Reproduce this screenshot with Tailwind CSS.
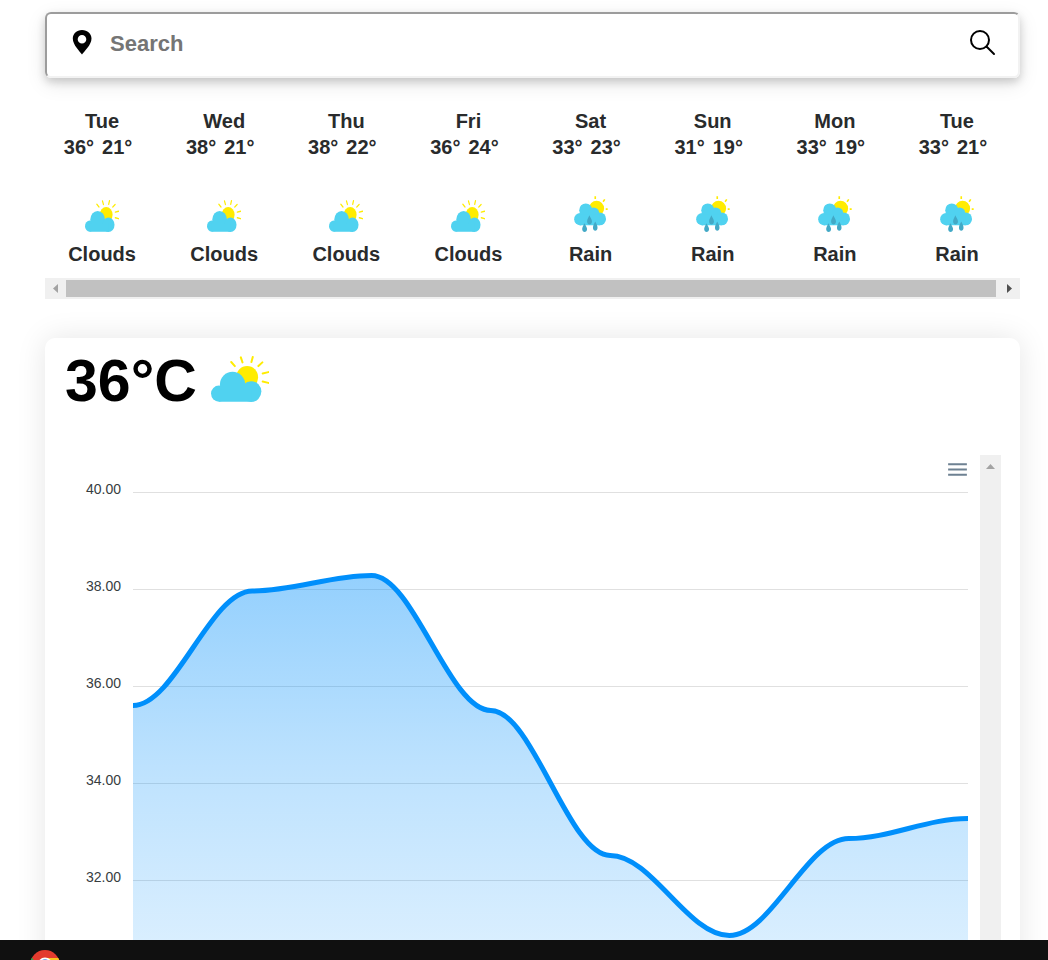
<!DOCTYPE html>
<html lang="en">
<head>
<meta charset="utf-8">
<meta name="viewport" content="width=device-width, initial-scale=1">
<title>Weather forecast</title>
<script src="https://cdn.jsdelivr.net/npm/@tailwindcss/browser@4"></script>
</head>
<body class="flex h-screen flex-col overflow-hidden bg-white font-['Liberation_Sans',Arial,sans-serif]">

<svg class="hidden" aria-hidden="true">
  <symbol id="partly-cloudy" viewBox="513 80 175 137" preserveAspectRatio="none">
    <circle cx="622" cy="143" r="33" fill="#ffec00"/>
    <path d="M574 98l11 12M603 84l5 15M639 83l-4 15M668 99l-12 11M686 128l-17 4M686 160l-17-4" fill="none" stroke="#ffec00" stroke-width="6" stroke-linecap="round"/>
    <g fill="#50d2f0"><circle cx="537" cy="192" r="24"/><circle cx="578" cy="165" r="38"/><circle cx="634" cy="186" r="31"/><path d="M537 180h97v36h-97z"/></g>
  </symbol>
  <symbol id="rain-sun" viewBox="98 290 104 107" preserveAspectRatio="none">
    <circle cx="167" cy="327" r="23" fill="#ffec00"/>
    <path d="M163 291v8M192 300l-5 7M195 329h6" fill="none" stroke="#ffec00" stroke-width="5"/>
    <g fill="#50d2f0"><circle cx="117" cy="359" r="18.500"/><circle cx="134" cy="332" r="20"/><circle cx="158" cy="341" r="17"/><circle cx="177" cy="358" r="19"/><path d="M117 345h60v32h-60z"/></g>
    <path d="M145 347C142 354 138 360 138 366C138 378 153 378 153 366C153 360 148 354 145 347M130 371C127 377 123 383 123 388C123 400 138 400 138 388C138 383 133 377 130 371M163 366C160 372 156 378 156 384C156 396 170 396 170 384C170 378 166 372 163 366" fill="#42a9c6"/>
  </symbol>
</svg>

<main class="min-h-0 flex-1 overflow-hidden pt-3 pr-7 pl-[45px]">
  <form class="flex h-[66px] items-center rounded-md border-2 border-t-[#9c9c9c] border-r-[#f2f2f2] border-b-[#f2f2f2] border-l-[#9c9c9c] pr-[22px] pl-[25px] shadow-[0_4px_8px_rgba(0,0,0,0.16),0_6px_20px_rgba(0,0,0,0.1)]" onsubmit="return false">
    <svg class="mb-1.5 h-[26px] w-5 shrink-0" viewBox="0 0 20 26" aria-hidden="true"><path fill-rule="evenodd" d="M10 1C4.6 1 .8 4.800 .8 9.500C.8 16 8 22.500 10 25.500C12 22.500 19.500 16 19.500 9.500C19.500 4.800 15.500 1 10 1zM10 6a4.300 4.300 0 1 1 0 8.600a4.300 4.300 0 0 1 0-8.600z"/></svg>
    <input type="text" aria-label="Search" placeholder="Search" class="mb-0.5 ml-[18px] h-10 min-w-0 flex-1 text-[22px] font-bold text-black outline-none placeholder:text-[#757575]">
    <button type="submit" aria-label="Submit search" class="mb-1.5">
      <svg class="block size-7" viewBox="0 0 28 28" fill="none" stroke="#000" stroke-width="2" stroke-linecap="round"><circle cx="12" cy="12" r="9"/><path d="M18.500 18.500L26 26"/></svg>
    </button>
  </form>

  <section aria-label="Daily forecast" class="mt-[30px]">
    <div class="mr-0.5 -ml-1 grid grid-cols-8 text-center text-xl leading-[26px] font-bold text-[#292b2c]">
      <div><p>Tue</p><p class="flex justify-center gap-2 pr-2"><span>36°</span><span>21°</span></p><div class="flex h-[72px] items-end justify-center"><svg class="h-8 w-[34px]"><use href="#partly-cloudy"/></svg></div><p class="mt-[9px]">Clouds</p></div>
      <div><p>Wed</p><p class="flex justify-center gap-2 pr-2"><span>38°</span><span>21°</span></p><div class="flex h-[72px] items-end justify-center"><svg class="h-8 w-[34px]"><use href="#partly-cloudy"/></svg></div><p class="mt-[9px]">Clouds</p></div>
      <div><p>Thu</p><p class="flex justify-center gap-2 pr-2"><span>38°</span><span>22°</span></p><div class="flex h-[72px] items-end justify-center"><svg class="h-8 w-[34px]"><use href="#partly-cloudy"/></svg></div><p class="mt-[9px]">Clouds</p></div>
      <div><p>Fri</p><p class="flex justify-center gap-2 pr-2"><span>36°</span><span>24°</span></p><div class="flex h-[72px] items-end justify-center"><svg class="h-8 w-[34px]"><use href="#partly-cloudy"/></svg></div><p class="mt-[9px]">Clouds</p></div>
      <div><p>Sat</p><p class="flex justify-center gap-2 pr-2"><span>33°</span><span>23°</span></p><div class="flex h-[72px] items-end justify-center"><svg class="h-9 w-[34px]"><use href="#rain-sun"/></svg></div><p class="mt-[9px]">Rain</p></div>
      <div><p>Sun</p><p class="flex justify-center gap-2 pr-2"><span>31°</span><span>19°</span></p><div class="flex h-[72px] items-end justify-center"><svg class="h-9 w-[34px]"><use href="#rain-sun"/></svg></div><p class="mt-[9px]">Rain</p></div>
      <div><p>Mon</p><p class="flex justify-center gap-2 pr-2"><span>33°</span><span>19°</span></p><div class="flex h-[72px] items-end justify-center"><svg class="h-9 w-[34px]"><use href="#rain-sun"/></svg></div><p class="mt-[9px]">Rain</p></div>
      <div><p>Tue</p><p class="flex justify-center gap-2 pr-2"><span>33°</span><span>21°</span></p><div class="flex h-[72px] items-end justify-center"><svg class="h-9 w-[34px]"><use href="#rain-sun"/></svg></div><p class="mt-[9px]">Rain</p></div>
    </div>
    <div class="mt-[11px] flex h-[21px] items-center bg-[#f0f0f0]" aria-hidden="true">
      <svg class="h-[21px] w-[21px] shrink-0" viewBox="0 0 21 21"><path d="M13 6v9l-5-4.500z" fill="#a3a3a3"/></svg>
      <div class="h-[17px] flex-1 bg-[#c1c1c1]"></div>
      <svg class="h-[21px] w-6 shrink-0" viewBox="0 0 24 21"><path d="M11 6v9l5-4.500z" fill="#505050"/></svg>
    </div>
  </section>

  <section aria-label="Temperature" class="mt-[39px] h-[720px] rounded-[10px] bg-white px-5 pt-[9px] pr-[19px] shadow-[0_0_30px_rgba(0,0,0,0.1)]">
    <div class="flex h-[68px] items-center">
      <h1 class="text-[59px] leading-[68px] font-bold text-black">36°C</h1>
      <svg class="mb-1 ml-[14px] h-[46px] w-[58px]" role="img" aria-label="Partly cloudy"><use href="#partly-cloudy"/></svg>
    </div>
    <div class="mt-10 flex h-[620px]">
      <div class="min-w-0 flex-1">
        <div class="flex h-6 justify-end pr-[10px] pt-0.5">
          <button type="button" aria-label="Chart menu" class="size-[25px]"><svg class="block size-[25px]" viewBox="0 0 24 24" fill="#6e8192"><path d="M3 18h18v-2H3v2zm0-5h18v-2H3v2zm0-7v2h18V6H3z"/></svg></button>
        </div>
        <div class="flex pr-3">
          <div class="w-14 shrink-0 text-right text-sm leading-5 text-[#373d3f]">
            <p class="h-[97px]">40.00</p><p class="h-[97px]">38.00</p><p class="h-[97px]">36.00</p><p class="h-[97px]">34.00</p><p class="h-[97px]">32.00</p>
          </div>
          <svg class="mt-[13px] ml-3 h-[560px] min-w-0 flex-1" viewBox="0 0 834 560" preserveAspectRatio="none" role="img" aria-label="Temperature chart">
            <defs><linearGradient id="area" gradientUnits="userSpaceOnUse" x1="0" y1="83" x2="0" y2="560"><stop offset="0" stop-color="#008ffb" stop-opacity="0.420"/><stop offset="0.400" stop-color="#008ffb" stop-opacity="0.260"/><stop offset="1" stop-color="#008ffb" stop-opacity="0.080"/></linearGradient></defs>
            <path d="M0 .5H834M0 97.500H834M0 194.500H834M0 291.500H834M0 388.500H834M0 485.500H834" stroke="#e0e0e0"/>
            <path fill="url(#area)" d="M0 213.500C41.700 213.500 77.400 99 119.100 99C160.800 99 196.600 83.500 238.300 83.500C280 83.500 315.700 218.500 357.400 218.500C399.100 218.500 434.900 363.500 476.600 363.500C518.300 363.500 554 443.500 595.700 443.500C637.400 443.500 673.200 346.500 714.900 346.500C756.600 346.500 792.300 326.500 834 326.500V560H0Z"/>
            <path fill="none" stroke="#008ffb" stroke-width="5" d="M0 213.500C41.700 213.500 77.400 99 119.100 99C160.800 99 196.600 83.500 238.300 83.500C280 83.500 315.700 218.500 357.400 218.500C399.100 218.500 434.900 363.500 476.600 363.500C518.300 363.500 554 443.500 595.700 443.500C637.400 443.500 673.200 346.500 714.900 346.500C756.600 346.500 792.300 326.500 834 326.500"/>
          </svg>
        </div>
      </div>
      <div class="w-[21px] shrink-0 bg-[#f0f0f0]" aria-hidden="true"><svg class="size-[21px]" viewBox="0 0 21 21"><path d="M6 14h9l-4.500-5z" fill="#a3a3a3"/></svg></div>
    </div>
  </section>
</main>

<footer class="relative z-10 h-5 shrink-0 overflow-hidden bg-[#101010] pt-2.5 pl-[30px]">
  <svg class="size-[30px]" viewBox="0 0 30 30" aria-hidden="true">
    <circle cx="15" cy="15" r="15" fill="#e33b2e"/>
    <path d="M15 8h13.300A15 15 0 0 1 15 30l6.500-11z" fill="#fcc31e"/>
    <path d="M2 7.500A15 15 0 0 0 15 30l6-11.500H9z" fill="#2da94f"/>
    <circle cx="15" cy="15" r="7.500" fill="#fff"/><circle cx="15" cy="15" r="5.800" fill="#4a86e0"/>
  </svg>
</footer>
</body>
</html>
